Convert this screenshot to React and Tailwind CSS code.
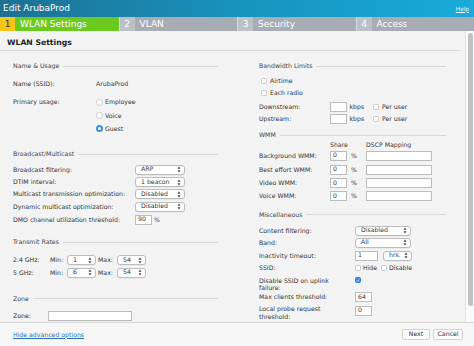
import React from "react";

function Arrows() {
    return (
        <svg width="4" height="7" viewBox="0 0 4 7" className="shrink-0">
            <path d="M2 0.6L3.5 2.8H0.5Z M2 6.4L0.5 4.2H3.5Z" fill="#444" />
        </svg>
    );
}

function Select({ value, className }) {
    return (
        <div
            className={`flex items-center justify-between h-[10px] rounded-[3px] border border-[#bcbcbc] bg-white pl-[5px] pr-[3px] shadow-[0_0.5px_0.5px_rgba(0,0,0,0.08)] ${className}`}
        >
            <span className="leading-none">{value}</span>
            <Arrows />
        </div>
    );
}

function Input({ value = "", className }) {
    return (
        <div
            className={`flex items-center h-[10px] border border-[#bcbcbc] bg-white pl-[2px] leading-none ${className}`}
        >
            {value}
        </div>
    );
}

function Check({ checked }) {
    if (checked) {
        return (
            <div className="w-[6px] h-[6px] rounded-[1.5px] bg-[#3b8ee6] border border-[#2f7fd6] flex items-center justify-center shrink-0">
                <svg width="5" height="5" viewBox="0 0 5 5">
                    <path d="M1 2.6L2 3.6L4 1.2" stroke="#fff" strokeWidth="0.9" fill="none" />
                </svg>
            </div>
        );
    }
    return <div className="w-[6px] h-[6px] rounded-[1.5px] bg-white border border-[#c6c6c6] shrink-0" />;
}

function Radio({ checked }) {
    if (checked) {
        return (
            <div className="w-[7px] h-[7px] rounded-full bg-[#3b8ee6] flex items-center justify-center shrink-0">
                <div className="w-[2.5px] h-[2.5px] rounded-full bg-white" />
            </div>
        );
    }
    return <div className="w-[7px] h-[7px] rounded-full bg-white border border-[#cdcdcd] shrink-0" />;
}

function Legend({ title, className }) {
    return (
        <div className={`flex items-center h-[12px] ${className}`}>
            <span className="text-[#444]">{title}</span>
            <div className="flex-1 ml-[4px] h-px bg-[#d9d9d9]" />
        </div>
    );
}

function Tab({ num, label, active }) {
    return (
        <div className={`flex items-center ${active ? "bg-[#6bc91f]" : "bg-[#a8adb5] border-l border-[#d5d8dc]"}`}>
            <div
                className={`w-[15px] h-full flex items-center justify-center ${
                    active ? "bg-[#f6c519] text-[#333]" : "bg-[#bcc0c7] text-white"
                }`}
            >
                {num}
            </div>
            <span className="ml-[5px] text-white">{label}</span>
        </div>
    );
}

export default function App() {
    return (
        <div className="w-[474px] h-[346px] flex flex-col overflow-hidden bg-[#f3f3f3] font-['DejaVu_Sans',sans-serif] text-[#333] text-[6.2px] leading-[8px]">
            <header className="h-[17px] shrink-0 flex items-center justify-between pl-[3px] pr-[5px] bg-linear-to-r from-[#1c7193] via-[#1693be] to-[#19abda]">
                <span className="text-[9px] text-white leading-none">Edit ArubaProd</span>
                <a className="text-[5.8px] text-[#eef8fc] underline">Help</a>
            </header>

            <nav className="h-[14px] shrink-0 grid grid-cols-4 text-[9px] leading-none">
                <Tab num="1" label="WLAN Settings" active />
                <Tab num="2" label="VLAN" />
                <Tab num="3" label="Security" />
                <Tab num="4" label="Access" />
            </nav>

            <div className="h-[291px] shrink-0 flex">
                <div className="w-[465px] overflow-hidden">
                    <div className="mr-[5px] h-[20px] border-b border-[#d9d9d9] pl-[7px] pt-[7px]">
                        <h2 className="font-bold text-[7.7px] leading-[10px] text-[#222]">WLAN Settings</h2>
                    </div>

                    <div className="flex">
                        {/* left column */}
                        <div className="ml-[13px] w-[205px] flex flex-col">
                            <Legend title="Name & Usage" className="mt-[9px]" />
                            <div className="flex items-center h-[12px] mt-[6px]">
                                <span className="w-[83px]">Name (SSID):</span>
                                <span>ArubaProd</span>
                            </div>
                            <div className="flex items-start mt-[6px]">
                                <span className="w-[83px] h-[12px] flex items-center">Primary usage:</span>
                                <div className="flex flex-col">
                                    <div className="flex items-center h-[12px] gap-[2px]">
                                        <Radio />
                                        <span>Employee</span>
                                    </div>
                                    <div className="flex items-center h-[12px] gap-[2px] mt-[1.5px]">
                                        <Radio />
                                        <span>Voice</span>
                                    </div>
                                    <div className="flex items-center h-[12px] gap-[2px] mt-[1px]">
                                        <Radio checked />
                                        <span>Guest</span>
                                    </div>
                                </div>
                            </div>

                            <Legend title="Broadcast/Multicast" className="mt-[13.5px]" />
                            <div className="flex items-center h-[12px] mt-[3.5px]">
                                <span className="w-[122px]">Broadcast filtering:</span>
                                <Select value="ARP" className="w-[50px]" />
                            </div>
                            <div className="flex items-center h-[12px] mt-[0.5px]">
                                <span className="w-[122px]">DTIM interval:</span>
                                <Select value="1 beacon" className="w-[50px]" />
                            </div>
                            <div className="flex items-center h-[12px]">
                                <span className="w-[122px]">Multicast transmission optimization:</span>
                                <Select value="Disabled" className="w-[50px]" />
                            </div>
                            <div className="flex items-center h-[12px] mt-[0.5px]">
                                <span className="w-[122px]">Dynamic multicast optimization:</span>
                                <Select value="Disabled" className="w-[50px]" />
                            </div>
                            <div className="flex items-center h-[12px] mt-[1px]">
                                <span className="w-[122px]">DMO channel utilization threshold:</span>
                                <Input value="90" className="w-[17px]" />
                                <span className="ml-[2px]">%</span>
                            </div>

                            <Legend title="Transmit Rates" className="mt-[10.5px]" />
                            <div className="flex items-center h-[12px] mt-[6px]">
                                <span className="w-[37px]">2.4 GHz:</span>
                                <span className="w-[17px]">Min:</span>
                                <Select value="1" className="w-[29px]" />
                                <span className="w-[19px] ml-[2px]">Max:</span>
                                <Select value="54" className="w-[29px]" />
                            </div>
                            <div className="flex items-center h-[12px] mt-[0.5px]">
                                <span className="w-[37px]">5 GHz:</span>
                                <span className="w-[17px]">Min:</span>
                                <Select value="6" className="w-[29px]" />
                                <span className="w-[19px] ml-[2px]">Max:</span>
                                <Select value="54" className="w-[29px]" />
                            </div>

                            <Legend title="Zone" className="mt-[14px]" />
                            <div className="flex items-center h-[12px] mt-[5.5px]">
                                <span className="w-[35px]">Zone:</span>
                                <Input className="w-[84px] h-[8.5px]" />
                            </div>
                        </div>

                        {/* right column */}
                        <div className="ml-[41px] w-[187px] flex flex-col">
                            <Legend title="Bandwidth Limits" className="mt-[9px]" />
                            <div className="flex items-center h-[12px] mt-[3px] pl-[2px] gap-[3px]">
                                <Check />
                                <span>Airtime</span>
                            </div>
                            <div className="flex items-center h-[12px] pl-[2px] gap-[3px]">
                                <Check />
                                <span>Each radio</span>
                            </div>
                            <div className="flex items-center h-[12px] mt-[2px]">
                                <span className="w-[71px]">Downstream:</span>
                                <Input className="w-[17px]" />
                                <span className="w-[26px] pl-[2.5px]">kbps</span>
                                <Check />
                                <span className="ml-[3px]">Per user</span>
                            </div>
                            <div className="flex items-center h-[12px]">
                                <span className="w-[71px]">Upstream:</span>
                                <Input className="w-[17px]" />
                                <span className="w-[26px] pl-[2.5px]">kbps</span>
                                <Check />
                                <span className="ml-[3px]">Per user</span>
                            </div>

                            <Legend title="WMM" className="mt-[4px] h-[10px]" />
                            <div className="flex items-center h-[7px]">
                                <span className="ml-[71px] w-[36px]">Share</span>
                                <span>DSCP Mapping</span>
                            </div>
                            {[
                                ["Background WMM:", "mt-[1.5px]"],
                                ["Best effort WMM:", "mt-[2px]"],
                                ["Video WMM:", "mt-[1.5px]"],
                                ["Voice WMM:", "mt-[1px]"],
                            ].map(([label, mt]) => (
                                <div key={label} className={`flex items-center h-[12px] ${mt}`}>
                                    <span className="w-[71px]">{label}</span>
                                    <Input value="0" className="w-[17px]" />
                                    <span className="w-[19px] pl-[4px]">%</span>
                                    <Input className="w-[66px]" />
                                </div>
                            ))}

                            <Legend title="Miscellaneous" className="mt-[6.5px]" />
                            <div className="flex items-center h-[12px] mt-[4px]">
                                <span className="w-[96px]">Content filtering:</span>
                                <Select value="Disabled" className="w-[56px]" />
                            </div>
                            <div className="flex items-center h-[12px]">
                                <span className="w-[96px]">Band:</span>
                                <Select value="All" className="w-[56px]" />
                            </div>
                            <div className="flex items-center h-[12px] mt-[1px]">
                                <span className="w-[96px]">Inactivity timeout:</span>
                                <Input value="1" className="w-[23px]" />
                                <Select value="hrs." className="w-[29px] ml-[5px]" />
                            </div>
                            <div className="flex items-center h-[12px]">
                                <span className="w-[96px]">SSID:</span>
                                <Check />
                                <span className="ml-[2px] w-[18px]">Hide</span>
                                <Check />
                                <span className="ml-[2px]">Disable</span>
                            </div>
                            <div className="flex items-start mt-[2.5px] h-[16px]">
                                <span className="w-[96px] leading-[7.5px] pt-[0.5px]">
                                    Disable SSID on uplink
                                    <br />
                                    failure:
                                </span>
                                <div className="mt-[1px]">
                                    <Check checked />
                                </div>
                            </div>
                            <div className="flex items-center h-[10px]">
                                <span className="w-[96px]">Max clients threshold:</span>
                                <Input value="64" className="w-[17px] h-[9px]" />
                            </div>
                            <div className="flex items-start mt-[2.5px] h-[16px]">
                                <span className="w-[96px] leading-[7.5px] pt-[0.5px]">
                                    Local probe request
                                    <br />
                                    threshold:
                                </span>
                                <Input value="0" className="w-[17px] h-[9px] mt-[1px]" />
                            </div>
                            <div className="flex items-start mt-[1px] h-[12px]">
                                <span className="w-[96px] pt-[1px]">SSID encoding:</span>
                                <Select value="Default" className="w-[80px]" />
                            </div>
                        </div>
                    </div>
                </div>
                <div className="w-[9px] bg-[#fafafa] border-l border-[#e2e2e2] pt-[2px] pl-[2px]">
                    <div className="w-[4.5px] h-[273px] rounded-full bg-[#c1c1c1]" />
                </div>
            </div>

            <footer className="h-[24px] shrink-0 border-t border-[#d6d6d6] bg-[#f6f6f6] flex items-center justify-between pl-[13px] pr-[11px]">
                <a className="text-[#2c6fb3] underline">Hide advanced options</a>
                <div className="flex gap-[3px]">
                    <button className="w-[28px] h-[11px] rounded-[2px] border border-[#d3d3d3] bg-[#fbfbfb] leading-none">
                        Next
                    </button>
                    <button className="w-[30px] h-[11px] rounded-[2px] border border-[#d3d3d3] bg-[#fbfbfb] leading-none">
                        Cancel
                    </button>
                </div>
            </footer>
        </div>
    );
}
